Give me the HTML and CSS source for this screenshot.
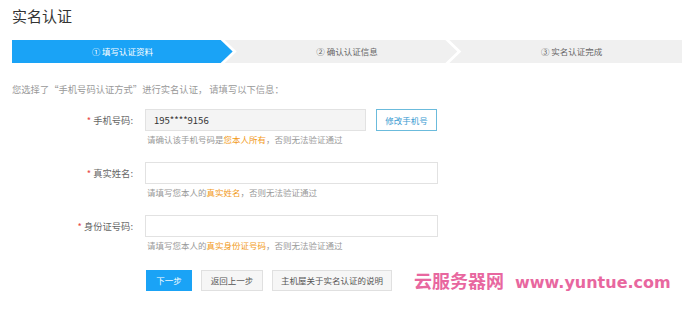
FILE: index.html
```html
<!DOCTYPE html>
<html lang="zh-CN">
<head>
    <meta charset="UTF-8">
    <meta name="viewport" content="width=device-width, initial-scale=1.0">
    <title>实名认证</title>
    <link rel="stylesheet" href="styles.css">
</head>
<body>
    <div class="page">
        <h1>实名认证</h1>

        <div class="steps">
            <div class="step first active">① 填写认证资料</div>
            <div class="step">② 确认认证信息</div>
            <div class="step last">③ 实名认证完成</div>
        </div>

        <p class="intro">您选择了“手机号码认证方式”进行实名认证， 请填写以下信息：</p>

        <div class="form-row">
            <label class="label"><span class="req">*</span> 手机号码:</label>
            <div class="field">
                <div class="input-line">
                    <input class="input readonly" type="text" value="195****9156" readonly>
                    <button class="btn-outline">修改手机号</button>
                </div>
                <div class="hint">请确认该手机号码是<em>您本人所有</em>，否则无法验证通过</div>
            </div>
        </div>

        <div class="form-row">
            <label class="label"><span class="req">*</span> 真实姓名:</label>
            <div class="field">
                <input class="input wide" type="text">
                <div class="hint">请填写您本人的<em>真实姓名</em>，否则无法验证通过</div>
            </div>
        </div>

        <div class="form-row">
            <label class="label"><span class="req">*</span> 身份证号码:</label>
            <div class="field">
                <input class="input wide" type="text">
                <div class="hint">请填写您本人的<em>真实身份证号码</em>，否则无法验证通过</div>
            </div>
        </div>

        <div class="actions">
            <button class="btn primary">下一步</button>
            <button class="btn back">返回上一步</button>
            <button class="btn help">主机屋关于实名认证的说明</button>
            <span class="watermark"><span class="wm-cn">云服务器网</span><span class="wm-en">www.yuntue.com</span></span>
        </div>
    </div>
</body>
</html>
```

FILE: styles.css
```css
body {
    margin: 0;
    background-color: white;
    font-family: "Noto Sans CJK SC", "Noto Sans", sans-serif;
}
.page {
    padding: 0 18px 0 12px;
}
h1 {
    margin: 0;
    padding-top: 6px;
    font-size: 15px;
    line-height: 20px;
    font-weight: normal;
    color: #333;
}
/* Step bar */
.steps {
    display: flex;
    margin-top: 14px;
    height: 23px;
}
.step {
    flex: 1;
    margin-left: -8px;
    padding-left: 12px;
    background-color: #f0f0f0;
    color: #666;
    font-size: 8.5px;
    line-height: 23px;
    text-align: center;
    clip-path: polygon(0 0, calc(100% - 12px) 0, 100% 50%, calc(100% - 12px) 100%, 0 100%, 12px 50%);
}
.step.first {
    margin-left: 0;
    padding-left: 0;
    clip-path: polygon(0 0, calc(100% - 12px) 0, 100% 50%, calc(100% - 12px) 100%, 0 100%);
}
.step.last {
    clip-path: polygon(0 0, 100% 0, 100% 100%, 0 100%, 12px 50%);
}
.step.active {
    background-color: #1aa3f6;
    color: white;
}
.intro {
    margin: 19px 0 0;
    font-size: 9.3px;
    line-height: 14px;
    color: #999;
}
/* Form */
.form-row {
    display: flex;
    gap: 12px;
    margin-top: 13px;
}
.form-row + .form-row {
    margin-top: 17px;
}
.label {
    width: 121px;
    text-align: right;
    font-size: 9.3px;
    line-height: 22px;
    color: #666;
}
.req {
    color: #e94a4a;
}
.field {
    display: flex;
    flex-direction: column;
}
.input-line {
    display: flex;
    gap: 10px;
}
.input {
    box-sizing: border-box;
    height: 22px;
    padding: 0 8px;
    border: 1px solid #e2e2e2;
    font-family: inherit;
    font-size: 9.5px;
    color: #333;
    outline: none;
}
.input.readonly {
    width: 221px;
    background-color: #f4f4f4;
}
.input.wide {
    width: 293px;
}
.btn-outline {
    box-sizing: border-box;
    width: 61px;
    height: 22px;
    padding: 0;
    border: 1px solid #6bbbdc;
    background-color: white;
    color: #3b9bd2;
    font-family: inherit;
    font-size: 8.5px;
}
.hint {
    margin-top: 2px;
    padding-left: 2px;
    font-size: 8.5px;
    line-height: 12px;
    color: #999;
}
.hint em {
    font-style: normal;
    color: #f29b1c;
}
/* Buttons */
.actions {
    display: flex;
    align-items: center;
    gap: 9px;
    margin-top: 16px;
    padding-left: 134px;
}
.btn {
    flex-shrink: 0;
    box-sizing: border-box;
    height: 21px;
    padding: 0;
    border: 1px solid #e0e0e0;
    background-color: #f6f6f6;
    color: #555;
    font-family: inherit;
    font-size: 8.5px;
    white-space: nowrap;
}
.btn.primary {
    width: 46px;
    border-color: #1aa3f6;
    background-color: #1aa3f6;
    color: white;
}
.btn.back {
    width: 62px;
}
.btn.help {
    width: 120px;
}
.watermark {
    display: flex;
    align-items: baseline;
    gap: 11px;
    margin-left: 13px;
    color: #e8679f;
    font-weight: bold;
    white-space: nowrap;
}
.wm-cn {
    font-family: "Noto Sans CJK SC", sans-serif;
    font-size: 18px;
}
.wm-en {
    font-family: "DejaVu Sans", sans-serif;
    font-size: 16px;
}
```
